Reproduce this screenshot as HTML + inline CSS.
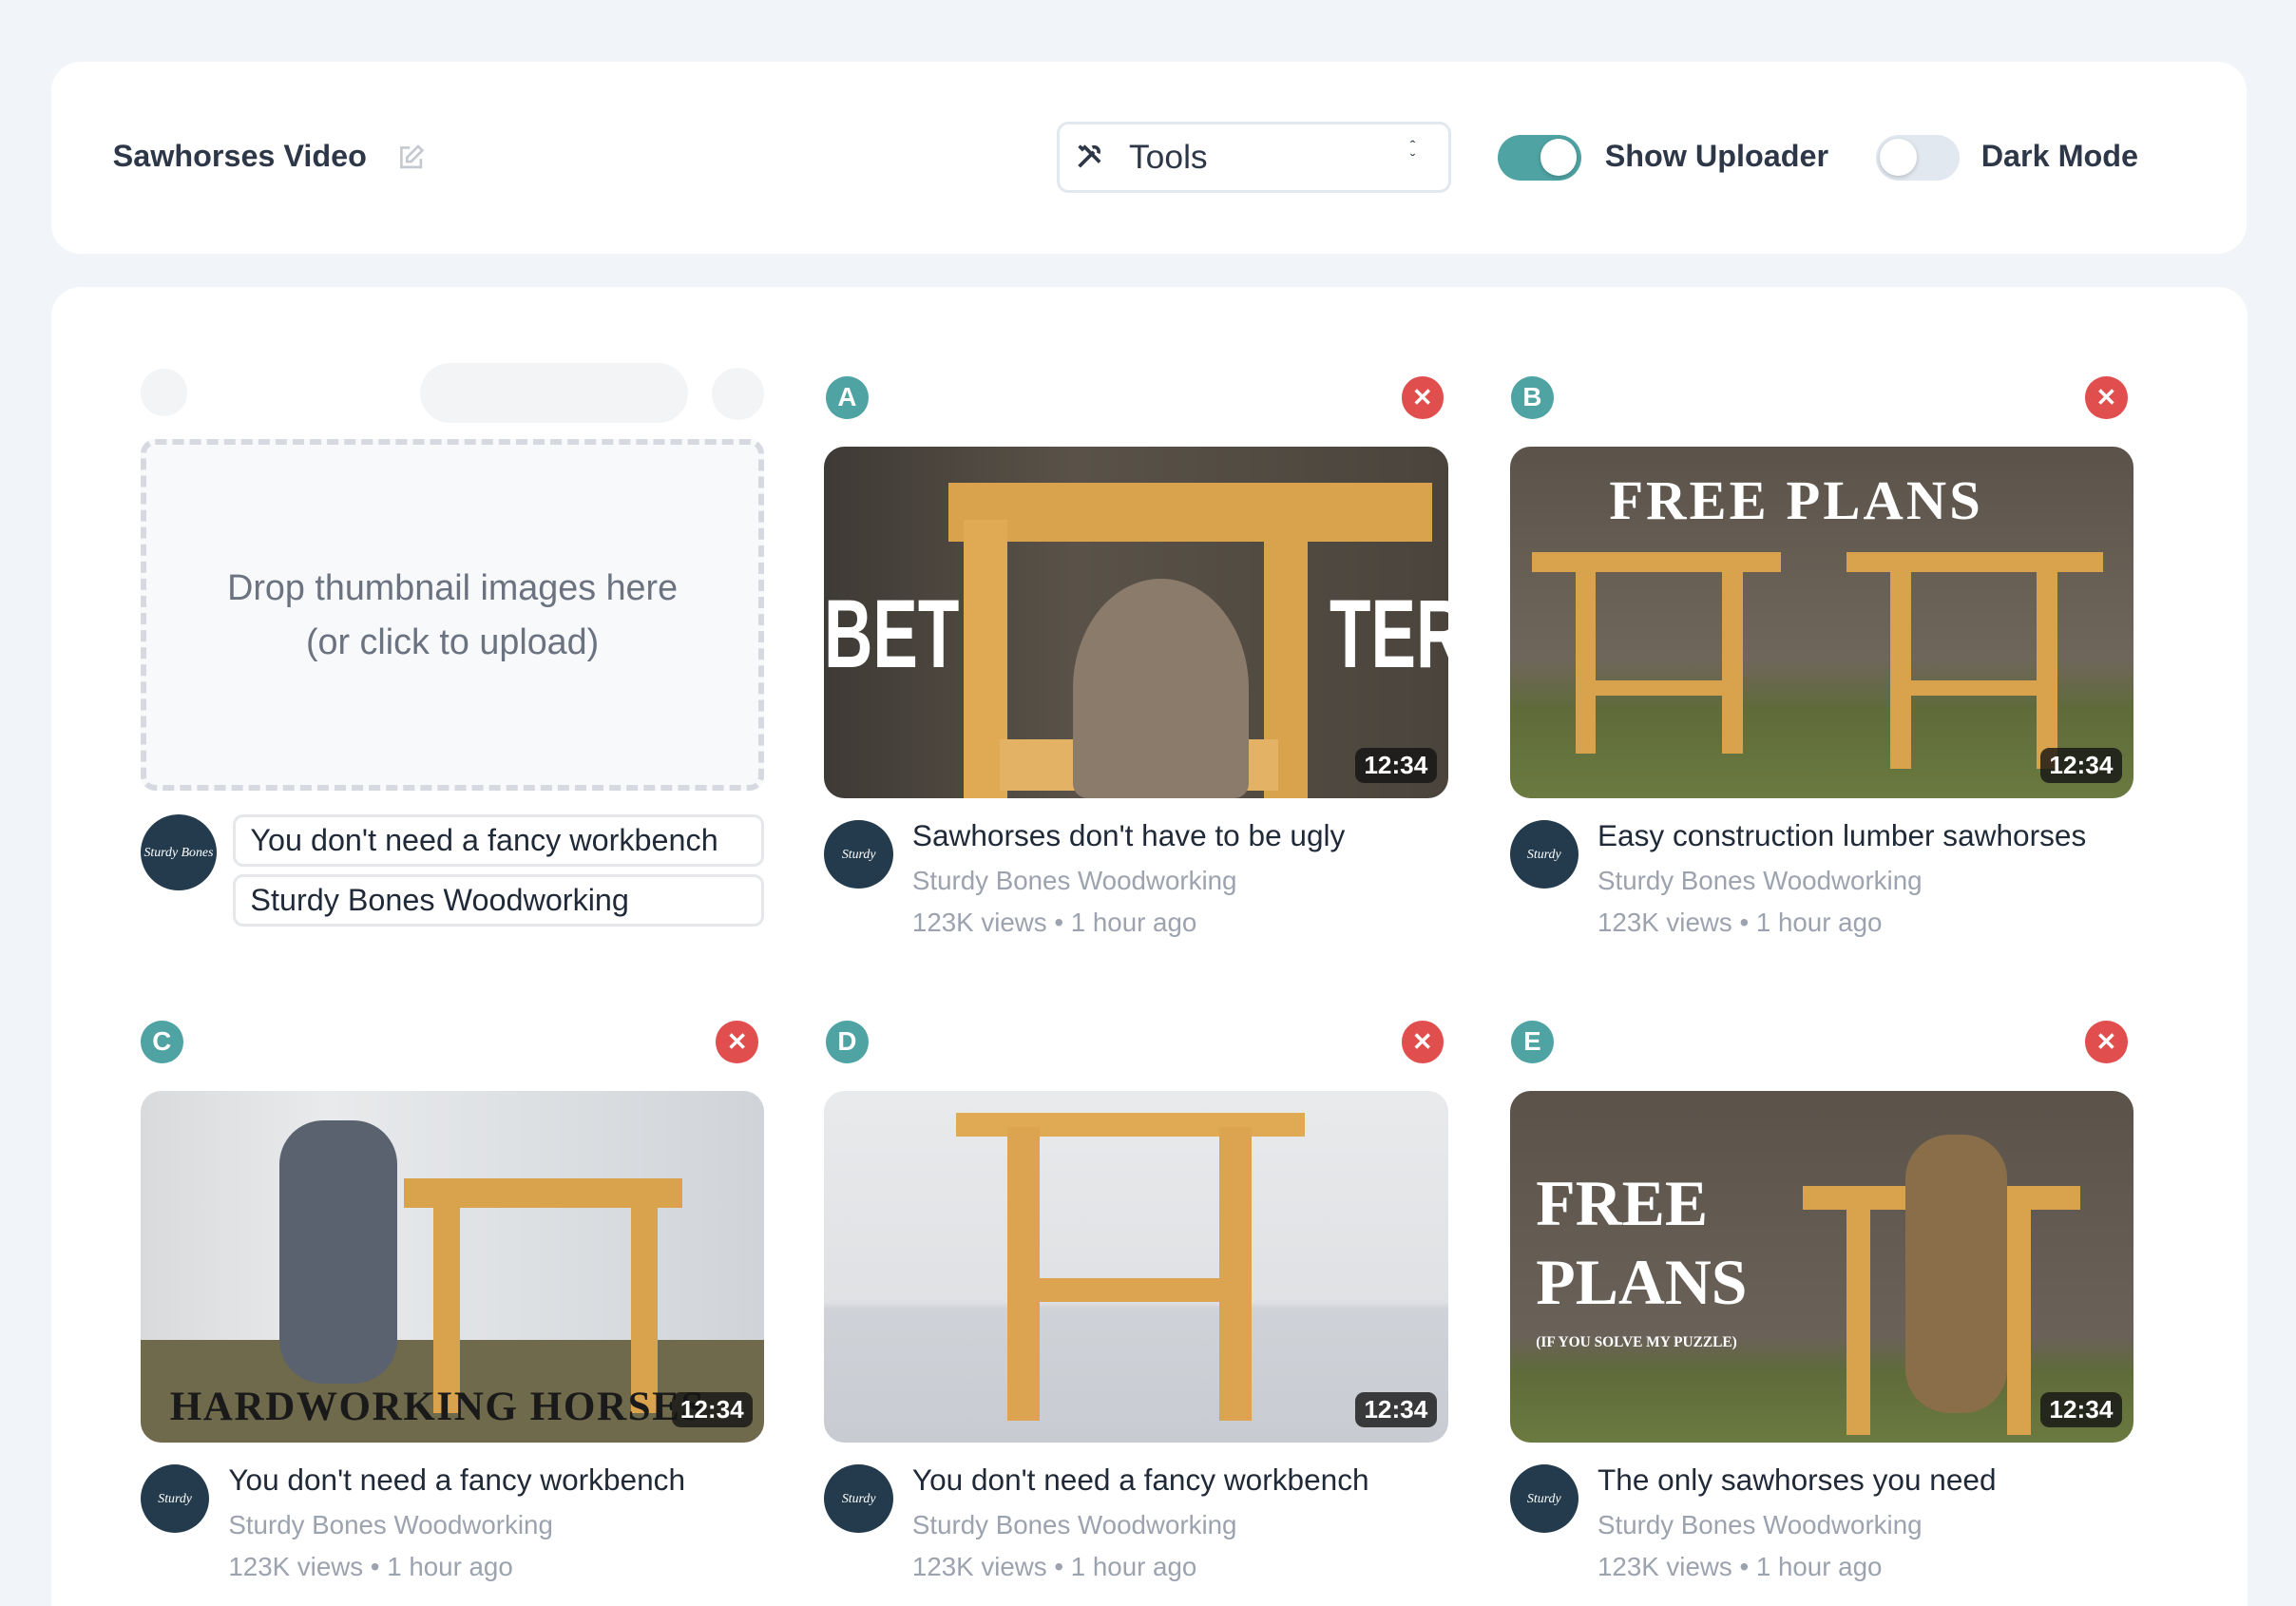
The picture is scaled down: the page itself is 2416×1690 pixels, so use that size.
<!DOCTYPE html>
<html><head><meta charset="utf-8"><style>
*{box-sizing:border-box;margin:0;padding:0}
html,body{width:2416px;height:1690px;overflow:hidden;background:#f1f4f8}
#w{zoom:1.5408;width:1568px;height:1097px;position:relative;font-family:"Liberation Sans",sans-serif;color:#2d3748}
.card{position:absolute;background:#fff;border-radius:20px}
.abs{position:absolute}
.tog{position:absolute;width:57px;height:31px;border-radius:16px}
.tog i{position:absolute;top:3px;width:25px;height:25px;border-radius:50%;background:#fff;box-shadow:0 1px 3px rgba(0,0,0,.2)}
.lbl{position:absolute;font-size:21px;font-weight:bold;color:#2d3748}
.badge{position:absolute;width:29px;height:29px;border-radius:50%;background:#4fa3a3;color:#fff;font-weight:bold;font-size:18px;text-align:center;line-height:29px}
.x{position:absolute;width:29px;height:29px;border-radius:50%;background:#e04e4e;color:#fff;font-size:17px;text-align:center;line-height:29px;font-weight:bold}
.th{position:absolute;width:426px;height:240px;border-radius:14px;overflow:hidden}
.dur{position:absolute;right:8px;bottom:10px;background:rgba(20,20,20,.8);color:#fff;font-weight:bold;font-size:17px;padding:2px 6px;border-radius:6px}
.av{position:absolute;width:47px;height:47px;border-radius:50%;background:#233b4d;color:#fff;font-family:"Liberation Serif",serif;font-size:9px;text-align:center;line-height:47px;font-style:italic}
.t{position:absolute;font-size:20.5px;color:#1f2937;white-space:nowrap}
.c{position:absolute;font-size:18px;color:#9ca3af;white-space:nowrap}
.big{position:absolute;color:#fff;font-family:"Liberation Serif",serif;font-weight:bold;white-space:nowrap}
</style></head><body><div id="w">
<div class="card" style="left:35px;top:42px;width:1499px;height:131px"></div>
<div class="lbl" style="left:77px;top:95px;font-size:21px">Sawhorses Video</div>
<svg class="abs" style="left:271px;top:98px" width="19" height="19" viewBox="0 0 20 20" fill="none" stroke="#c4c8cf" stroke-width="1.8"><path d="M9 3H3v14h14v-6"/><path d="M15 2l3 3-8 8H7v-3z"/></svg>
<div class="abs" style="left:722px;top:83px;width:269px;height:49px;border:2px solid #e2e8f0;border-radius:8px"></div>
<svg class="abs" style="left:734px;top:97px" width="20" height="20" viewBox="0 0 20 20" stroke="#2d3748" stroke-width="2.4" fill="none"><path d="M3 17L13 7M6 3l11 11M12 4a3 3 0 0 1 4 4M3 3l3 3"/></svg>
<div class="abs" style="left:771px;top:94px;font-size:23px;color:#2d3748">Tools</div>
<div class="abs" style="left:963px;top:96px;font-size:11px;color:#2d3748;line-height:9px">ˆ<br>ˇ</div>
<div class="tog" style="left:1023px;top:92px;background:#4fa3a3"><i style="left:29px"></i></div>
<div class="lbl" style="left:1096px;top:95px">Show Uploader</div>
<div class="tog" style="left:1281px;top:92px;background:#e2e8f0"><i style="left:3px"></i></div>
<div class="lbl" style="left:1353px;top:95px">Dark Mode</div>

<div class="card" style="left:35px;top:196px;width:1500px;height:940px"></div>
<div class="abs" style="left:96px;top:252px;width:32px;height:32px;border-radius:50%;background:#f3f4f6"></div>
<div class="abs" style="left:287px;top:248px;width:183px;height:41px;border-radius:21px;background:#f3f4f6"></div>
<div class="abs" style="left:486px;top:251px;width:36px;height:36px;border-radius:50%;background:#f3f4f6"></div>
<div class="abs" style="left:96px;top:300px;width:426px;height:240px;border:4px dashed #d6d9df;border-radius:10px;background:#f8f9fb;text-align:center;color:#6b7280;font-size:24.5px;line-height:37px;padding-top:79px">Drop thumbnail images here<br>(or click to upload)</div>
<div class="av" style="left:96px;top:556px;width:52px;height:52px;line-height:52px">Sturdy Bones</div>
<div class="abs" style="left:159px;top:556px;width:363px;height:36px;border:2px solid #e5e7eb;border-radius:7px;font-size:21px;padding:4px 10px;color:#1f2937">You don't need a fancy workbench</div>
<div class="abs" style="left:159px;top:597px;width:363px;height:36px;border:2px solid #e5e7eb;border-radius:7px;font-size:21px;padding:4px 10px;color:#1f2937">Sturdy Bones Woodworking</div>

<div class="badge" style="left:564px;top:257px">A</div><div class="x" style="left:957px;top:257px">✕</div>
<div class="th" style="left:563px;top:305px;background:linear-gradient(90deg,#3e3a35,#5a5248 40%,#4a443c);">
<div class="abs" style="left:85px;top:25px;width:330px;height:40px;background:#d9a24d"></div>
<div class="abs" style="left:95px;top:50px;width:30px;height:190px;background:#e0aa55"></div>
<div class="abs" style="left:300px;top:50px;width:30px;height:190px;background:#d9a24d"></div>
<div class="abs" style="left:120px;top:200px;width:190px;height:35px;background:#e3b265"></div>
<div class="abs" style="left:170px;top:90px;width:120px;height:150px;border-radius:50% 50% 10px 10px;background:#8b7b6b"></div>
<div class="big" style="left:0;top:90px;font-family:'Liberation Sans';font-size:66px;transform:scaleX(.7);transform-origin:left">BET</div>
<div class="big" style="left:345px;top:90px;font-family:'Liberation Sans';font-size:66px;transform:scaleX(.7);transform-origin:left">TER</div>
<div class="dur">12:34</div></div>
<div class="av" style="left:563px;top:560px">Sturdy Bones</div>
<div class="t" style="left:623px;top:559px">Sawhorses don't have to be ugly</div>
<div class="c" style="left:623px;top:591px">Sturdy Bones Woodworking</div>
<div class="c" style="left:623px;top:620px">123K views • 1 hour ago</div>

<div class="badge" style="left:1032px;top:257px">B</div><div class="x" style="left:1424px;top:257px">✕</div>
<div class="th" style="left:1031px;top:305px;background:linear-gradient(180deg,#5b534a,#6f665b 60%,#5f6b3a 75%,#6b7a40)">
<div class="big" style="left:68px;top:15px;font-size:38px;letter-spacing:2px">FREE PLANS</div>
<div class="abs" style="left:15px;top:72px;width:170px;height:14px;background:#d9a24d"></div>
<div class="abs" style="left:45px;top:80px;width:14px;height:130px;background:#d9a24d"></div>
<div class="abs" style="left:145px;top:80px;width:14px;height:130px;background:#d9a24d"></div>
<div class="abs" style="left:50px;top:160px;width:105px;height:10px;background:#d9a24d"></div>
<div class="abs" style="left:230px;top:72px;width:175px;height:14px;background:#d9a24d"></div>
<div class="abs" style="left:260px;top:80px;width:14px;height:140px;background:#d9a24d"></div>
<div class="abs" style="left:360px;top:80px;width:14px;height:140px;background:#d9a24d"></div>
<div class="abs" style="left:265px;top:160px;width:100px;height:10px;background:#d9a24d"></div>
<div class="dur">12:34</div></div>
<div class="av" style="left:1031px;top:560px">Sturdy Bones</div>
<div class="t" style="left:1091px;top:559px">Easy construction lumber sawhorses</div>
<div class="c" style="left:1091px;top:591px">Sturdy Bones Woodworking</div>
<div class="c" style="left:1091px;top:620px">123K views • 1 hour ago</div>

<div class="badge" style="left:96px;top:697px">C</div><div class="x" style="left:489px;top:697px">✕</div>
<div class="th" style="left:96px;top:745px;background:linear-gradient(90deg,#d8dadc,#e8eaec 30%,#d0d4d8);">
<div class="abs" style="left:0;top:170px;width:426px;height:70px;background:#6f6a4c"></div>
<div class="abs" style="left:180px;top:60px;width:190px;height:20px;background:#d9a24d"></div>
<div class="abs" style="left:200px;top:70px;width:18px;height:150px;background:#d9a24d"></div>
<div class="abs" style="left:335px;top:70px;width:18px;height:150px;background:#d9a24d"></div>
<div class="abs" style="left:95px;top:20px;width:80px;height:180px;border-radius:30px;background:#5a6270"></div>
<div class="big" style="left:20px;top:200px;font-size:28px;color:#1a1a1a;letter-spacing:1px">HARDWORKING HORSES</div>
<div class="dur">12:34</div></div>
<div class="av" style="left:96px;top:1000px">Sturdy Bones</div>
<div class="t" style="left:156px;top:999px">You don't need a fancy workbench</div>
<div class="c" style="left:156px;top:1031px">Sturdy Bones Woodworking</div>
<div class="c" style="left:156px;top:1060px">123K views • 1 hour ago</div>

<div class="badge" style="left:564px;top:697px">D</div><div class="x" style="left:957px;top:697px">✕</div>
<div class="th" style="left:563px;top:745px;background:linear-gradient(180deg,#e9eaec,#dfe1e4 60%,#cfd3d8 62%,#c8ccd2)">
<div class="abs" style="left:90px;top:15px;width:238px;height:16px;background:#e0aa55"></div>
<div class="abs" style="left:125px;top:25px;width:22px;height:200px;background:#dca450"></div>
<div class="abs" style="left:270px;top:25px;width:22px;height:200px;background:#dca450"></div>
<div class="abs" style="left:140px;top:128px;width:140px;height:16px;background:#dca450"></div>
<div class="dur">12:34</div></div>
<div class="av" style="left:563px;top:1000px">Sturdy Bones</div>
<div class="t" style="left:623px;top:999px">You don't need a fancy workbench</div>
<div class="c" style="left:623px;top:1031px">Sturdy Bones Woodworking</div>
<div class="c" style="left:623px;top:1060px">123K views • 1 hour ago</div>

<div class="badge" style="left:1032px;top:697px">E</div><div class="x" style="left:1424px;top:697px">✕</div>
<div class="th" style="left:1031px;top:745px;background:linear-gradient(180deg,#5b534a,#6a6158 70%,#5f6b3a 80%,#6b7a40)">
<div class="abs" style="left:200px;top:65px;width:190px;height:16px;background:#d9a24d"></div>
<div class="abs" style="left:230px;top:75px;width:16px;height:160px;background:#d9a24d"></div>
<div class="abs" style="left:340px;top:75px;width:16px;height:160px;background:#d9a24d"></div>
<div class="abs" style="left:270px;top:30px;width:70px;height:190px;border-radius:30px;background:#8a6e4a"></div>
<div class="big" style="left:18px;top:52px;font-size:44px">FREE</div>
<div class="big" style="left:18px;top:106px;font-size:44px">PLANS</div>
<div class="big" style="left:18px;top:166px;font-size:10px">(IF YOU SOLVE MY PUZZLE)</div>
<div class="dur">12:34</div></div>
<div class="av" style="left:1031px;top:1000px">Sturdy Bones</div>
<div class="t" style="left:1091px;top:999px">The only sawhorses you need</div>
<div class="c" style="left:1091px;top:1031px">Sturdy Bones Woodworking</div>
<div class="c" style="left:1091px;top:1060px">123K views • 1 hour ago</div>
</div></body></html>
